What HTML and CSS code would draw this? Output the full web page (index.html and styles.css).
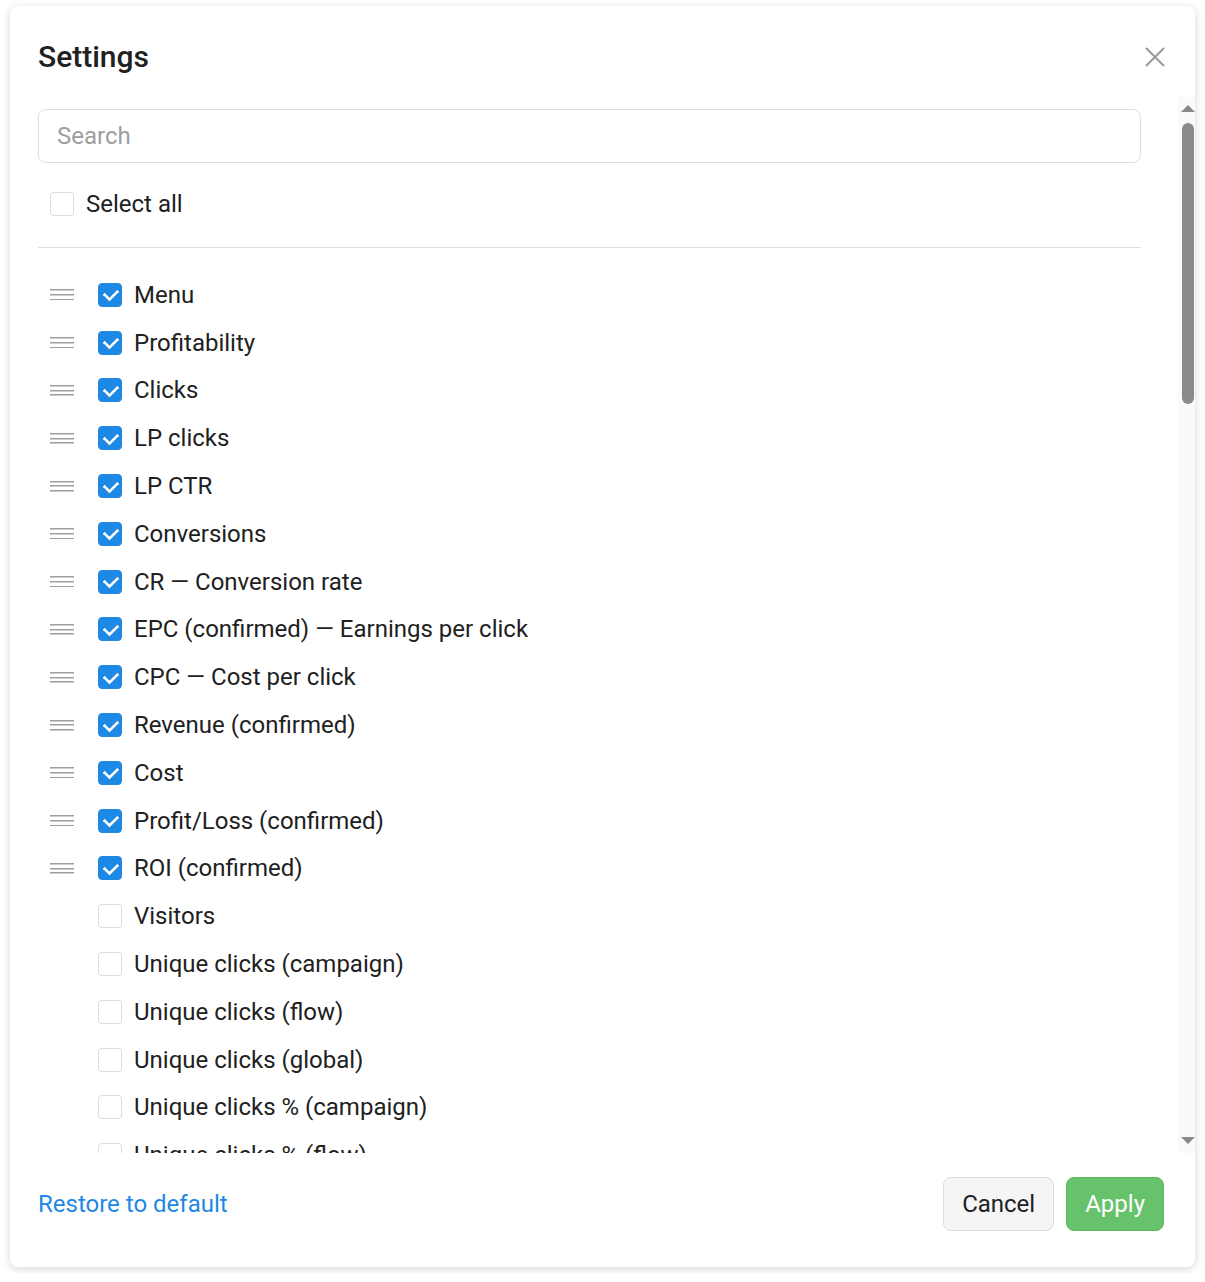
FILE: index.html
```html
<!DOCTYPE html>
<html lang="en">
<head>
<meta charset="utf-8">
<title>Settings</title>
<link rel="stylesheet" href="styles.css">
</head>
<body>
<div class="modal">
  <div class="modal-header">
    <h2 class="title">Settings</h2>
    <button class="close" aria-label="Close">
      <svg width="20" height="20" viewBox="0 0 20 20"><path d="M1 1L19 19M19 1L1 19" stroke="#9a9a9a" stroke-width="2" fill="none"/></svg>
    </button>
  </div>
  <div class="body-wrap">
    <div class="modal-body">
      <input class="search" type="text" placeholder="Search">
      <label class="select-all"><span class="cb"></span><span class="label">Select all</span></label>
      <div class="divider"></div>
      <ul class="list">
        <li class="row"><span class="handle"></span><span class="cb on"></span><span class="label">Menu</span></li>
        <li class="row"><span class="handle"></span><span class="cb on"></span><span class="label">Profitability</span></li>
        <li class="row"><span class="handle"></span><span class="cb on"></span><span class="label">Clicks</span></li>
        <li class="row"><span class="handle"></span><span class="cb on"></span><span class="label">LP clicks</span></li>
        <li class="row"><span class="handle"></span><span class="cb on"></span><span class="label">LP CTR</span></li>
        <li class="row"><span class="handle"></span><span class="cb on"></span><span class="label">Conversions</span></li>
        <li class="row"><span class="handle"></span><span class="cb on"></span><span class="label">CR — Conversion rate</span></li>
        <li class="row"><span class="handle"></span><span class="cb on"></span><span class="label">EPC (confirmed) — Earnings per click</span></li>
        <li class="row"><span class="handle"></span><span class="cb on"></span><span class="label">CPC — Cost per click</span></li>
        <li class="row"><span class="handle"></span><span class="cb on"></span><span class="label">Revenue (confirmed)</span></li>
        <li class="row"><span class="handle"></span><span class="cb on"></span><span class="label">Cost</span></li>
        <li class="row"><span class="handle"></span><span class="cb on"></span><span class="label">Profit/Loss (confirmed)</span></li>
        <li class="row"><span class="handle"></span><span class="cb on"></span><span class="label">ROI (confirmed)</span></li>
        <li class="row"><span class="handle off"></span><span class="cb"></span><span class="label">Visitors</span></li>
        <li class="row"><span class="handle off"></span><span class="cb"></span><span class="label">Unique clicks (campaign)</span></li>
        <li class="row"><span class="handle off"></span><span class="cb"></span><span class="label">Unique clicks (flow)</span></li>
        <li class="row"><span class="handle off"></span><span class="cb"></span><span class="label">Unique clicks (global)</span></li>
        <li class="row"><span class="handle off"></span><span class="cb"></span><span class="label">Unique clicks % (campaign)</span></li>
        <li class="row"><span class="handle off"></span><span class="cb"></span><span class="label">Unique clicks % (flow)</span></li>
        <li class="row"><span class="handle off"></span><span class="cb"></span><span class="label">Unique clicks % (global)</span></li>
        <li class="row"><span class="handle off"></span><span class="cb"></span><span class="label">LP views</span></li>
        <li class="row"><span class="handle off"></span><span class="cb"></span><span class="label">Offer clicks</span></li>
        <li class="row"><span class="handle off"></span><span class="cb"></span><span class="label">Offer CTR</span></li>
        <li class="row"><span class="handle off"></span><span class="cb"></span><span class="label">Bots</span></li>
        <li class="row"><span class="handle off"></span><span class="cb"></span><span class="label">Bots %</span></li>
        <li class="row"><span class="handle off"></span><span class="cb"></span><span class="label">Conversions (pending)</span></li>
        <li class="row"><span class="handle off"></span><span class="cb"></span><span class="label">Conversions (declined)</span></li>
        <li class="row"><span class="handle off"></span><span class="cb"></span><span class="label">Conversions (total)</span></li>
        <li class="row"><span class="handle off"></span><span class="cb"></span><span class="label">CR (pending)</span></li>
        <li class="row"><span class="handle off"></span><span class="cb"></span><span class="label">CR (total)</span></li>
        <li class="row"><span class="handle off"></span><span class="cb"></span><span class="label">Approve rate</span></li>
        <li class="row"><span class="handle off"></span><span class="cb"></span><span class="label">Leads</span></li>
        <li class="row"><span class="handle off"></span><span class="cb"></span><span class="label">Sales</span></li>
        <li class="row"><span class="handle off"></span><span class="cb"></span><span class="label">Rejected</span></li>
        <li class="row"><span class="handle off"></span><span class="cb"></span><span class="label">Hold</span></li>
        <li class="row"><span class="handle off"></span><span class="cb"></span><span class="label">Trash</span></li>
        <li class="row"><span class="handle off"></span><span class="cb"></span><span class="label">EPC (pending)</span></li>
        <li class="row"><span class="handle off"></span><span class="cb"></span><span class="label">EPC (total)</span></li>
        <li class="row"><span class="handle off"></span><span class="cb"></span><span class="label">CPA — Cost per action</span></li>
        <li class="row"><span class="handle off"></span><span class="cb"></span><span class="label">CPM — Cost per mille</span></li>
        <li class="row"><span class="handle off"></span><span class="cb"></span><span class="label">Impressions</span></li>
        <li class="row"><span class="handle off"></span><span class="cb"></span><span class="label">CTR — Click-through rate</span></li>
        <li class="row"><span class="handle off"></span><span class="cb"></span><span class="label">Revenue (pending)</span></li>
        <li class="row"><span class="handle off"></span><span class="cb"></span><span class="label">Revenue (declined)</span></li>
        <li class="row"><span class="handle off"></span><span class="cb"></span><span class="label">Revenue (total)</span></li>
        <li class="row"><span class="handle off"></span><span class="cb"></span><span class="label">Profit/Loss (pending)</span></li>
        <li class="row"><span class="handle off"></span><span class="cb"></span><span class="label">Profit/Loss (total)</span></li>
        <li class="row"><span class="handle off"></span><span class="cb"></span><span class="label">ROI (pending)</span></li>
        <li class="row"><span class="handle off"></span><span class="cb"></span><span class="label">ROI (total)</span></li>
        <li class="row"><span class="handle off"></span><span class="cb"></span><span class="label">AOV — Average order value</span></li>
        <li class="row"><span class="handle off"></span><span class="cb"></span><span class="label">Payout</span></li>
        <li class="row"><span class="handle off"></span><span class="cb"></span><span class="label">Upsells</span></li>
        <li class="row"><span class="handle off"></span><span class="cb"></span><span class="label">Upsell revenue</span></li>
        <li class="row"><span class="handle off"></span><span class="cb"></span><span class="label">Refunds</span></li>
        <li class="row"><span class="handle off"></span><span class="cb"></span><span class="label">Refund rate</span></li>
        <li class="row"><span class="handle off"></span><span class="cb"></span><span class="label">Chargebacks</span></li>
        <li class="row"><span class="handle off"></span><span class="cb"></span><span class="label">Deposits</span></li>
        <li class="row"><span class="handle off"></span><span class="cb"></span><span class="label">First deposits</span></li>
        <li class="row"><span class="handle off"></span><span class="cb"></span><span class="label">Registrations</span></li>
        <li class="row"><span class="handle off"></span><span class="cb"></span><span class="label">Installs</span></li>
        <li class="row"><span class="handle off"></span><span class="cb"></span><span class="label">Subscriptions</span></li>
        <li class="row"><span class="handle off"></span><span class="cb"></span><span class="label">Trials</span></li>
        <li class="row"><span class="handle off"></span><span class="cb"></span><span class="label">Custom conversion 1</span></li>
        <li class="row"><span class="handle off"></span><span class="cb"></span><span class="label">Custom conversion 2</span></li>
        <li class="row"><span class="handle off"></span><span class="cb"></span><span class="label">Custom conversion 3</span></li>
        <li class="row"><span class="handle off"></span><span class="cb"></span><span class="label">Custom conversion 4</span></li>
        <li class="row"><span class="handle off"></span><span class="cb"></span><span class="label">Custom conversion 5</span></li>
        <li class="row"><span class="handle off"></span><span class="cb"></span><span class="label">Custom revenue 1</span></li>
        <li class="row"><span class="handle off"></span><span class="cb"></span><span class="label">Custom revenue 2</span></li>
        <li class="row"><span class="handle off"></span><span class="cb"></span><span class="label">Custom revenue 3</span></li>
        <li class="row"><span class="handle off"></span><span class="cb"></span><span class="label">Custom revenue 4</span></li>
        <li class="row"><span class="handle off"></span><span class="cb"></span><span class="label">Custom revenue 5</span></li>
        <li class="row"><span class="handle off"></span><span class="cb"></span><span class="label">Errors</span></li>
        <li class="row"><span class="handle off"></span><span class="cb"></span><span class="label">Proxy / VPN</span></li>
        <li class="row"><span class="handle off"></span><span class="cb"></span><span class="label">Empty referrer</span></li>
        <li class="row"><span class="handle off"></span><span class="cb"></span><span class="label">Session duration</span></li>
      </ul>
    </div>
    <div class="scrollbar" aria-hidden="true">
      <span class="sb-arrow up"></span>
      <span class="sb-thumb"></span>
      <span class="sb-arrow down"></span>
    </div>
  </div>
  <div class="modal-footer">
    <a class="restore" href="#">Restore to default</a>
    <div class="actions">
      <button class="btn btn-cancel">Cancel</button>
      <button class="btn btn-apply">Apply</button>
    </div>
  </div>
</div>
</body>
</html>
```
FILE: styles.css
```css
* { box-sizing: border-box; }
html, body { margin: 0; padding: 0; background: #ffffff; }
body {
  padding: 6px 10px;
  font-family: Roboto, "Liberation Sans", Arial, sans-serif;
  color: #212121;
}
.modal {
  width: 1185px;
  height: 1261px;
  background: #fff;
  border-radius: 8px;
  box-shadow: 0 2px 10px rgba(0, 0, 0, 0.16);
  display: flex;
  flex-direction: column;
  overflow: hidden;
}
.modal-header {
  height: 91px;
  flex: none;
  display: flex;
  justify-content: space-between;
  align-items: flex-start;
  padding: 33px 30px 0 28px;
}
.title {
  margin: 0;
  font-size: 30px;
  line-height: 36px;
  font-weight: 500;
  color: #212121;
}
.close {
  border: 0;
  background: none;
  padding: 0;
  margin-top: 8px;
  width: 20px;
  height: 20px;
  cursor: pointer;
}
.close svg { display: block; }
.body-wrap {
  flex: 1;
  min-height: 0;
  position: relative;
  display: flex;
}
.modal-body {
  flex: 1;
  overflow-y: auto;
  scrollbar-width: none;
  padding: 12px 54px 0 28px;
}
.scrollbar {
  position: absolute;
  top: 0;
  right: 0;
  bottom: 0;
  width: 17px;
  background: #fafafa;
  display: flex;
  flex-direction: column;
  align-items: center;
  padding-left: 3px;
}
.sb-arrow {
  width: 0;
  height: 0;
  border-left: 7px solid transparent;
  border-right: 7px solid transparent;
}
.sb-arrow.up {
  border-bottom: 7px solid #8a8a8a;
  margin-top: 8px;
}
.sb-arrow.down {
  border-top: 7px solid #8a8a8a;
  margin-top: auto;
  margin-bottom: 9px;
}
.sb-thumb {
  width: 12px;
  height: 281px;
  margin-top: 11px;
  border-radius: 6px;
  background: #8a8a8a;
}
.search {
  display: block;
  width: 100%;
  height: 54px;
  border: 1px solid #dcdcdc;
  border-radius: 8px;
  padding: 0 18px;
  font-family: inherit;
  font-size: 24px;
  color: #212121;
  outline: none;
}
.search::placeholder { color: #9e9e9e; }
.select-all {
  display: flex;
  align-items: center;
  gap: 12px;
  height: 48px;
  margin-top: 17px;
  padding-left: 12px;
}
.divider {
  height: 1px;
  background: #e0e0e0;
  margin-top: 19px;
}
.list {
  list-style: none;
  margin: 23px 0 0;
  padding: 0;
}
.row {
  display: flex;
  align-items: center;
  height: 47.8px;
  padding-left: 12px;
}
.handle {
  width: 24px;
  height: 11px;
  flex: none;
  margin-right: 24px;
  background:
    linear-gradient(#9e9e9e, #9e9e9e) top / 100% 1.5px no-repeat,
    linear-gradient(#9e9e9e, #9e9e9e) center / 100% 1.5px no-repeat,
    linear-gradient(#9e9e9e, #9e9e9e) bottom / 100% 1.5px no-repeat;
}
.handle.off { visibility: hidden; }
.cb {
  width: 24px;
  height: 24px;
  flex: none;
  border: 1px solid #dcdcdc;
  border-radius: 4px;
  background: #fff;
  position: relative;
}
.cb.on {
  background: #1e88e5;
  border-color: #1e88e5;
}
.cb.on::after {
  content: "";
  position: absolute;
  left: 7.4px;
  top: 2.6px;
  width: 6.5px;
  height: 11px;
  border: solid #fff;
  border-width: 0 3px 3px 0;
  border-radius: 1px;
  transform: rotate(45deg);
}
.row .cb { margin-right: 12px; }
.label {
  font-size: 24px;
  line-height: 28px;
  color: #212121;
  white-space: nowrap;
}
.modal-footer {
  flex: none;
  height: 114px;
  display: flex;
  justify-content: space-between;
  align-items: flex-start;
  padding: 24px 31px 0 28px;
}
.restore {
  color: #1e88e5;
  font-size: 24px;
  line-height: 54px;
  text-decoration: none;
}
.actions {
  display: flex;
  gap: 12px;
}
.btn {
  height: 54px;
  padding: 0 18px;
  border-radius: 8px;
  font-family: inherit;
  font-size: 24px;
  cursor: pointer;
}
.btn-cancel {
  background: #f5f5f5;
  border: 1px solid #dcdcdc;
  color: #212121;
}
.btn-apply {
  background: #66c36b;
  border: 1px solid #5cb860;
  color: #fff;
}
```
